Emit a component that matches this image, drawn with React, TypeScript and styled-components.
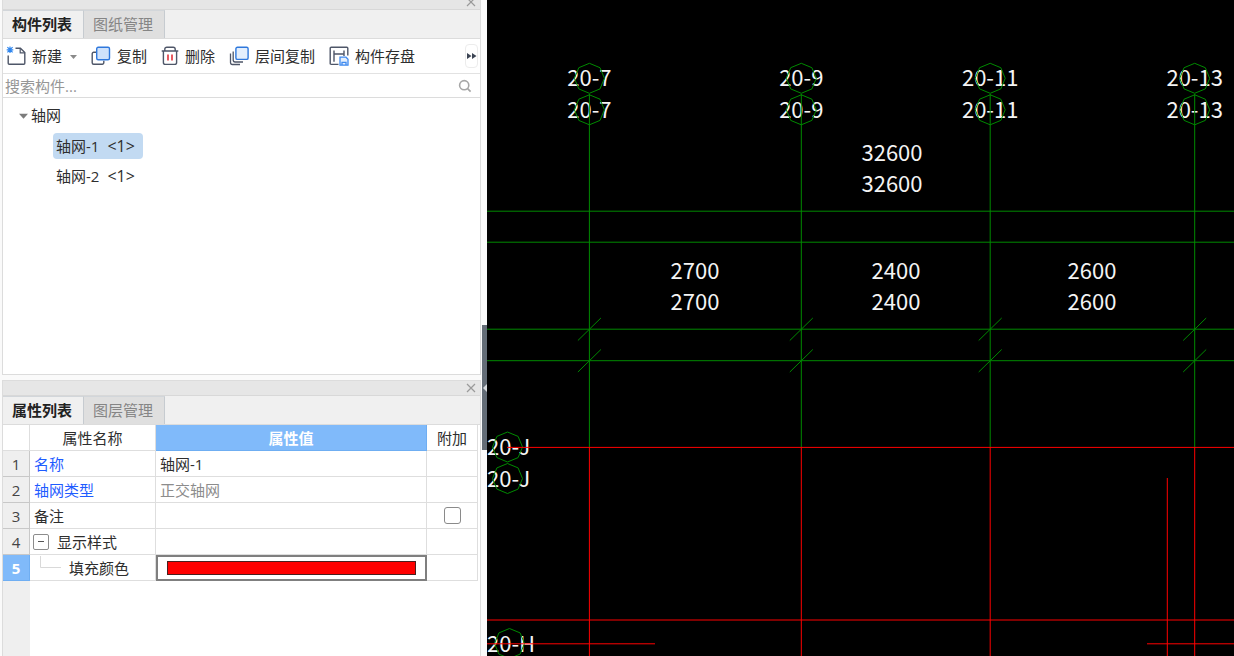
import React from "react";
import styled, { createGlobalStyle, css } from "styled-components";

const GlobalStyle = createGlobalStyle`
  *, *::before, *::after { box-sizing: border-box; }
  html, body { margin: 0; padding: 0; }
  body {
    background: #f0f0f0;
    color: #2e2e2e;
    font-family: "Open Sans", "Noto Sans CJK SC", sans-serif;
    font-size: 15px;
    line-height: 20px;
  }
  button, input { font: inherit; color: inherit; }
`;

const Layout = styled.div`
  display: flex;
  min-height: 100vh;
`;

const Sidebar = styled.aside`
  display: flex;
  flex-direction: column;
  flex: 0 0 481px;
  gap: 5px;
  padding-left: 2px;
  background: #fafafa;
`;

const Panel = styled.section<{ $grow?: boolean }>`
  display: flex;
  flex-direction: column;
  flex: ${(p) => (p.$grow ? "1 1 auto" : "0 0 auto")};
  border: 1px solid #dcdcdc;
  border-width: ${(p) => (p.$grow ? "1px 1px 0" : "0 1px 1px")};
  background: #fff;
`;

const TitleBar = styled.div<{ $height: number }>`
  display: flex;
  align-items: flex-end;
  justify-content: flex-end;
  height: ${(p) => p.$height}px;
  padding-right: 4px;
  overflow: hidden;
  background: #e6e6e6;
  border-bottom: 1px solid #d8d8d8;
`;

const CloseButton = styled.button`
  display: flex;
  padding: 0 0 2px;
  border: 0;
  background: none;
`;

const TabBar = styled.div`
  display: flex;
  height: 29px;
  background: #f0f0f0;
  border-bottom: 1px solid #dcdcdc;
`;

const Tab = styled.button<{ $active?: boolean }>`
  width: 81px;
  padding: 0 2px 2px 0;
  border: 0;
  border-right: 1px solid #c6cbd0;
  border-top: 1px solid #d2d6da;
  background: #dfdfdf;
  color: #858585;
  ${(p) =>
    p.$active &&
    css`
      background: #f0f0f0;
      color: #222;
      font-weight: 700;
    `}
`;

const Toolbar = styled.div`
  display: flex;
  align-items: center;
  height: 35px;
  padding: 0 2px 0 3px;
  border-bottom: 1px solid #e2e2e2;
`;

const ToolButton = styled.button`
  display: flex;
  align-items: center;
  gap: 6px;
  margin-right: 14px;
  padding: 0;
  border: 0;
  background: none;
  white-space: nowrap;
`;

const MenuMark = styled.span`
  display: flex;
  margin-left: 2px;
`;

const OverflowButton = styled.button`
  display: flex;
  align-items: center;
  justify-content: center;
  width: 13px;
  height: 24px;
  margin-left: auto;
  padding: 0;
  border: 1px solid #ececec;
  border-radius: 4px;
  background: #fff;
`;

const SearchRow = styled.label`
  display: flex;
  align-items: center;
  height: 24px;
  padding: 0 8px 0 2px;
  border-bottom: 1px solid #dcdcdc;
`;

const SearchInput = styled.input`
  flex: 1;
  min-width: 0;
  height: 20px;
  padding: 0;
  border: 0;
  outline: 0;
  background: none;
  &::placeholder { color: #969696; opacity: 1; }
`;

const Tree = styled.ul`
  min-height: 276px;
  margin: 0;
  padding: 3px 0 0 16px;
  list-style: none;
`;

const TreeChildren = styled.ul`
  margin: 0;
  padding: 0 0 0 34px;
  list-style: none;
`;

const TreeBranch = styled.button`
  display: flex;
  align-items: center;
  gap: 3px;
  height: 30px;
  padding: 0 0 2px;
  border: 0;
  background: none;
`;

const TreeLeaf = styled.button<{ $selected?: boolean }>`
  display: flex;
  align-items: center;
  gap: 8px;
  height: 26px;
  margin: 2px 0 4px;
  padding: 0 8px 0 3px;
  border: 0;
  border-radius: 4px;
  background: ${(p) => (p.$selected ? "#c2daf2" : "none")};
`;

const Count = styled.span`
  font-size: 16px;
`;

const GridArea = styled.div`
  flex: 1;
  padding-right: 2px;
  background: linear-gradient(to right, #efefef 27px, #fff 27px);
`;

const PropertyTable = styled.table`
  width: 100%;
  table-layout: fixed;
  border-collapse: separate;
  border-spacing: 0;
`;

const cell = css`
  height: 26px;
  padding: 0 4px;
  border-right: 1px solid #dedede;
  border-bottom: 1px solid #dedede;
  font-weight: 400;
  white-space: nowrap;
`;

const HeadCell = styled.th<{ $accent?: boolean }>`
  ${cell}
  background: #fff;
  ${(p) =>
    p.$accent &&
    css`
      background: #80bafa;
      border-color: #6faef2;
      color: #fff;
      font-weight: 700;
    `}
`;

const NumberCell = styled.th<{ $current?: boolean }>`
  ${cell}
  padding: 0;
  border-color: #c8c8c8;
  background: #efefef;
  color: #444;
  text-align: center;
  ${(p) =>
    p.$current &&
    css`
      background: #80bafa;
      border-color: #6faef2;
      color: #fff;
      font-weight: 700;
    `}
`;

const Cell = styled.td<{ $tone?: "link" | "muted"; $center?: boolean }>`
  ${cell}
  color: ${(p) => (p.$tone === "link" ? "#1f5cff" : p.$tone === "muted" ? "#8c8c8c" : "inherit")};
  text-align: ${(p) => (p.$center ? "center" : "left")};
`;

const EditCell = styled.td`
  height: 26px;
  padding: 0 9px;
  border: 2px solid #7f7f7f;
`;

const Swatch = styled.button`
  display: block;
  width: 100%;
  height: 14px;
  padding: 0;
  border: 1px solid #4a1f1f;
  background: #f00;
`;

const CheckBox = styled.input`
  appearance: none;
  display: block;
  width: 17px;
  height: 17px;
  margin: 0 auto;
  border: 1px solid #8a8a8a;
  border-radius: 3px;
  background: #fff;
`;

const NameLine = styled.div<{ $nested?: boolean }>`
  display: flex;
  align-items: center;
  gap: 8px;
  padding-left: ${(p) => (p.$nested ? "6px" : "0")};
`;

const Splitter = styled.div`
  display: flex;
  flex: 0 0 6px;
  align-items: center;
  justify-content: flex-end;
  background: #fafafa;
`;

const SplitterHandle = styled.button`
  display: flex;
  align-items: center;
  width: 5px;
  height: 125px;
  margin-top: 119px;
  padding: 0;
  border: 0;
  background: #646d77;
`;

const Viewport = styled.main`
  position: relative;
  flex: 1 1 0;
  min-width: 0;
  overflow: hidden;
  background: #000;
`;

const Drawing = styled.svg`
  position: absolute;
  inset: 0;
  width: 100%;
  height: 100%;
  text {
    fill: #f4f4f4;
    font-family: "Noto Sans CJK SC", sans-serif;
    font-size: 22px;
  }
`;

const CloseIcon = () => (
  <svg width="10" height="10" viewBox="0 0 10 10" stroke="#9a9a9a" strokeWidth="1.2">
    <path d="M1 1l8 8M9 1L1 9" />
  </svg>
);

const NewIcon = () => (
  <svg width="20" height="20" viewBox="0 0 20 20" fill="none">
    <path d="M2.2 9.5v7.7a1 1 0 0 0 1 1h14.6a1 1 0 0 0 1-1V6.6L14.4 2.2H9.5" stroke="#4e5668" strokeWidth="1.4" />
    <path d="M14.2 2.5v4.3h4.4" stroke="#4e5668" strokeWidth="1.2" />
    <path d="M4 .5v6.6M.7 3.8h6.6M1.4 1.2l5.2 5.2M6.6 1.2L1.4 6.4" stroke="#2f86ee" strokeWidth="1.2" />
  </svg>
);

const CopyIcon = () => (
  <svg width="20" height="20" viewBox="0 0 20 20" fill="none">
    <path d="M5.5 6.2H2.7a1.5 1.5 0 0 0-1.5 1.5v9.1a1.5 1.5 0 0 0 1.5 1.5h8.6a1.5 1.5 0 0 0 1.5-1.5v-2" stroke="#4e5668" strokeWidth="1.4" />
    <rect x="5.7" y="1.2" width="12.8" height="12.6" rx="1.5" fill="#cfe2fb" stroke="#2f78dc" strokeWidth="1.4" />
  </svg>
);

const LayerCopyIcon = () => (
  <svg width="20" height="20" viewBox="0 0 20 20" fill="none">
    <path d="M1.5 7.5v9.1a1.9 1.9 0 0 0 1.9 1.9H11M4.2 5.5v8.6a1.9 1.9 0 0 0 1.9 1.9H14" stroke="#4e5668" strokeWidth="1.3" />
    <rect x="6.9" y="1.2" width="12.2" height="12.2" rx="1.5" fill="#e4effd" stroke="#2f78dc" strokeWidth="1.4" />
  </svg>
);

const DeleteIcon = () => (
  <svg width="18" height="20" viewBox="0 0 18 20" fill="none">
    <path d="M.7 5h16.6M3.8 4.8V3.2a2 2 0 0 1 2-2h6.4a2 2 0 0 1 2 2v1.6M2.4 5.2v11.2a2 2 0 0 0 2 2h9.2a2 2 0 0 0 2-2V5.2" stroke="#4e5668" strokeWidth="1.4" />
    <path d="M7 8.4v6.2M11 8.4v6.2" stroke="#e0242c" strokeWidth="1.5" />
  </svg>
);

const SaveIcon = () => (
  <svg width="20" height="20" viewBox="0 0 20 20" fill="none">
    <path d="M9.5 18.4H2.2a1 1 0 0 1-1-1V2.2a1 1 0 0 1 1-1h15.6a1 1 0 0 1 1 1v7.3" stroke="#4e5668" strokeWidth="1.4" />
    <path d="M5 4.5v11.2M5 8h10M15 4.5v5.4" stroke="#4e5668" strokeWidth="1.4" />
    <path d="M11 11.2h6l2 2v6h-8z" fill="#e4effd" stroke="#3f8af0" strokeWidth="1.3" />
    <path d="M13 19v-2.6h4V19" stroke="#3f8af0" strokeWidth="1.3" />
  </svg>
);

const CaretDown = ({ size, color }: { size: number; color: string }) => (
  <svg width={size} height={size} viewBox="0 0 10 10">
    <path d="M0 3h10L5 8.5z" fill={color} />
  </svg>
);

const ForwardIcon = () => (
  <svg width="10" height="8" viewBox="0 0 10 8" fill="#3d4554">
    <path d="M0 1l4.5 3L0 7zM5 1l4.5 3L5 7z" />
  </svg>
);

const SearchIcon = () => (
  <svg width="14" height="14" viewBox="0 0 14 14" fill="none" stroke="#a6a6a6" strokeWidth="1.6">
    <circle cx="6.2" cy="6.2" r="4.6" />
    <path d="M9.6 9.6l3 3" />
  </svg>
);

const CollapseIcon = () => (
  <svg width="16" height="16" viewBox="0 0 16 16" fill="none">
    <rect x=".5" y=".5" width="15" height="15" rx="1.5" stroke="#8c8c8c" />
    <path d="M5 7.5h6" stroke="#555" />
  </svg>
);

const BranchIcon = () => (
  <svg width="21" height="24" viewBox="0 0 21 24" fill="none">
    <path d="M.5 0v11.5H21" stroke="#d9d9d9" />
  </svg>
);

const ExpandBox = styled.button`
  display: flex;
  margin-left: -1px;
  padding: 0;
  border: 0;
  background: none;
`;

type PanelTabsProps = { active: string; other: string; label: string };

const PanelTabs = ({ active, other, label }: PanelTabsProps) => (
  <TabBar role="tablist" aria-label={label}>
    <Tab role="tab" aria-selected $active>{active}</Tab>
    <Tab role="tab" aria-selected={false}>{other}</Tab>
  </TabBar>
);

const octagon = (cx: number, cy: number, r = 15) =>
  Array.from({ length: 8 }, (_, i) => {
    const a = (i * Math.PI) / 4;
    return `${(cx + r * Math.sin(a)).toFixed(1)},${(cy - r * Math.cos(a)).toFixed(1)}`;
  }).join(" ");

const axes = [
  { x: 102.4, label: "20-7" },
  { x: 314.3, label: "20-9" },
  { x: 503.2, label: "20-11" },
  { x: 707.7, label: "20-13" },
];

const rowAxes = [
  { x: 20.5, y: 447, label: "20-J" },
  { x: 20.5, y: 478.5, label: "20-J" },
  { x: 22.5, y: 643.5, label: "20-H" },
];

const dimensions = [
  { x: 405, y: 161, value: "32600" },
  { x: 208, y: 279, value: "2700" },
  { x: 409, y: 279, value: "2400" },
  { x: 605, y: 279, value: "2600" },
];

const GREEN = "#008a00";
const RED = "#ff0000";

const AxisDrawing = () => (
  <Drawing role="img" aria-label="轴网">
    {axes.map((a) => (
      <g key={a.label} textAnchor="middle">
        <text x={a.x} y={86}>{a.label}</text>
        <text x={a.x} y={118}>{a.label}</text>
      </g>
    ))}
    {rowAxes.map((a) => (
      <text key={a.y} x={0} y={Math.round(a.y + 8.4)}>{a.label}</text>
    ))}
    {dimensions.map((d) => (
      <g key={d.value} textAnchor="middle">
        <text x={d.x} y={d.y}>{d.value}</text>
        <text x={d.x} y={d.y + 31}>{d.value}</text>
      </g>
    ))}
    <g stroke={GREEN} fill="none">
      {[211.2, 242.2, 329.2, 360.7].map((y) => (
        <line key={y} x1="0" x2="100%" y1={y} y2={y} />
      ))}
      {axes.map((a) => (
        <g key={a.label}>
          <polygon points={octagon(a.x, 78.3)} />
          <polygon points={octagon(a.x, 109.8)} />
          <line x1={a.x} x2={a.x} y1="94" y2="447" />
          <path d={`M${a.x - 11.5} 340.5l23-22.5M${a.x - 11.5} 372l23-22.5`} />
        </g>
      ))}
      {rowAxes.map((a) => (
        <polygon key={a.y} points={octagon(a.x, a.y)} />
      ))}
    </g>
    <g stroke={RED}>
      <line x1="20" x2="100%" y1="447.4" y2="447.4" />
      <line x1="0" x2="100%" y1="620" y2="620" />
      <line x1="0" x2="168" y1="643.8" y2="643.8" />
      <line x1="660" x2="100%" y1="643.8" y2="643.8" />
      <line x1="680.3" x2="680.3" y1="478" y2="100%" />
      {axes.map((a) => (
        <line key={a.label} x1={a.x} x2={a.x} y1="447" y2="100%" />
      ))}
    </g>
  </Drawing>
);

export default function App() {
  return (
    <>
      <GlobalStyle />
      <Layout>
        <Sidebar>
          <Panel>
            <TitleBar $height={10}>
              <CloseButton aria-label="关闭"><CloseIcon /></CloseButton>
            </TitleBar>
            <PanelTabs label="构件" active="构件列表" other="图纸管理" />
            <Toolbar>
              <ToolButton>
                <NewIcon />新建<MenuMark><CaretDown size={7} color="#8a8a8a" /></MenuMark>
              </ToolButton>
              <ToolButton><CopyIcon />复制</ToolButton>
              <ToolButton><DeleteIcon />删除</ToolButton>
              <ToolButton><LayerCopyIcon />层间复制</ToolButton>
              <ToolButton><SaveIcon />构件存盘</ToolButton>
              <OverflowButton aria-label="更多"><ForwardIcon /></OverflowButton>
            </Toolbar>
            <SearchRow>
              <SearchInput type="text" placeholder="搜索构件..." aria-label="搜索构件" />
              <SearchIcon />
            </SearchRow>
            <Tree>
              <li>
                <TreeBranch aria-expanded><CaretDown size={9} color="#7c7c7c" />轴网</TreeBranch>
                <TreeChildren>
                  <li><TreeLeaf $selected><span>轴网-1</span><Count>&lt;1&gt;</Count></TreeLeaf></li>
                  <li><TreeLeaf><span>轴网-2</span><Count>&lt;1&gt;</Count></TreeLeaf></li>
                </TreeChildren>
              </li>
            </Tree>
          </Panel>

          <Panel $grow>
            <TitleBar $height={15}>
              <CloseButton aria-label="关闭"><CloseIcon /></CloseButton>
            </TitleBar>
            <PanelTabs label="属性" active="属性列表" other="图层管理" />
            <GridArea>
              <PropertyTable>
                <colgroup>
                  <col style={{ width: 27 }} />
                  <col style={{ width: 126 }} />
                  <col />
                  <col style={{ width: 51 }} />
                </colgroup>
                <thead>
                  <tr>
                    <HeadCell />
                    <HeadCell>属性名称</HeadCell>
                    <HeadCell $accent>属性值</HeadCell>
                    <HeadCell>附加</HeadCell>
                  </tr>
                </thead>
                <tbody>
                  <tr>
                    <NumberCell>1</NumberCell>
                    <Cell $tone="link">名称</Cell>
                    <Cell>轴网-1</Cell>
                    <Cell />
                  </tr>
                  <tr>
                    <NumberCell>2</NumberCell>
                    <Cell $tone="link">轴网类型</Cell>
                    <Cell $tone="muted">正交轴网</Cell>
                    <Cell />
                  </tr>
                  <tr>
                    <NumberCell>3</NumberCell>
                    <Cell>备注</Cell>
                    <Cell />
                    <Cell $center><CheckBox type="checkbox" aria-label="附加 备注" /></Cell>
                  </tr>
                  <tr>
                    <NumberCell>4</NumberCell>
                    <Cell>
                      <NameLine>
                        <ExpandBox aria-label="折叠"><CollapseIcon /></ExpandBox>显示样式
                      </NameLine>
                    </Cell>
                    <Cell />
                    <Cell />
                  </tr>
                  <tr>
                    <NumberCell $current>5</NumberCell>
                    <Cell><NameLine $nested><BranchIcon />填充颜色</NameLine></Cell>
                    <EditCell><Swatch aria-label="填充颜色" /></EditCell>
                    <Cell />
                  </tr>
                </tbody>
              </PropertyTable>
            </GridArea>
          </Panel>
        </Sidebar>
        <Splitter>
          <SplitterHandle aria-label="收起面板">
            <svg width="5" height="8" viewBox="0 0 5 8"><path d="M5 0v8L1 4z" fill="#d5d9dd" /></svg>
          </SplitterHandle>
        </Splitter>
        <Viewport>
          <AxisDrawing />
        </Viewport>
      </Layout>
    </>
  );
}
